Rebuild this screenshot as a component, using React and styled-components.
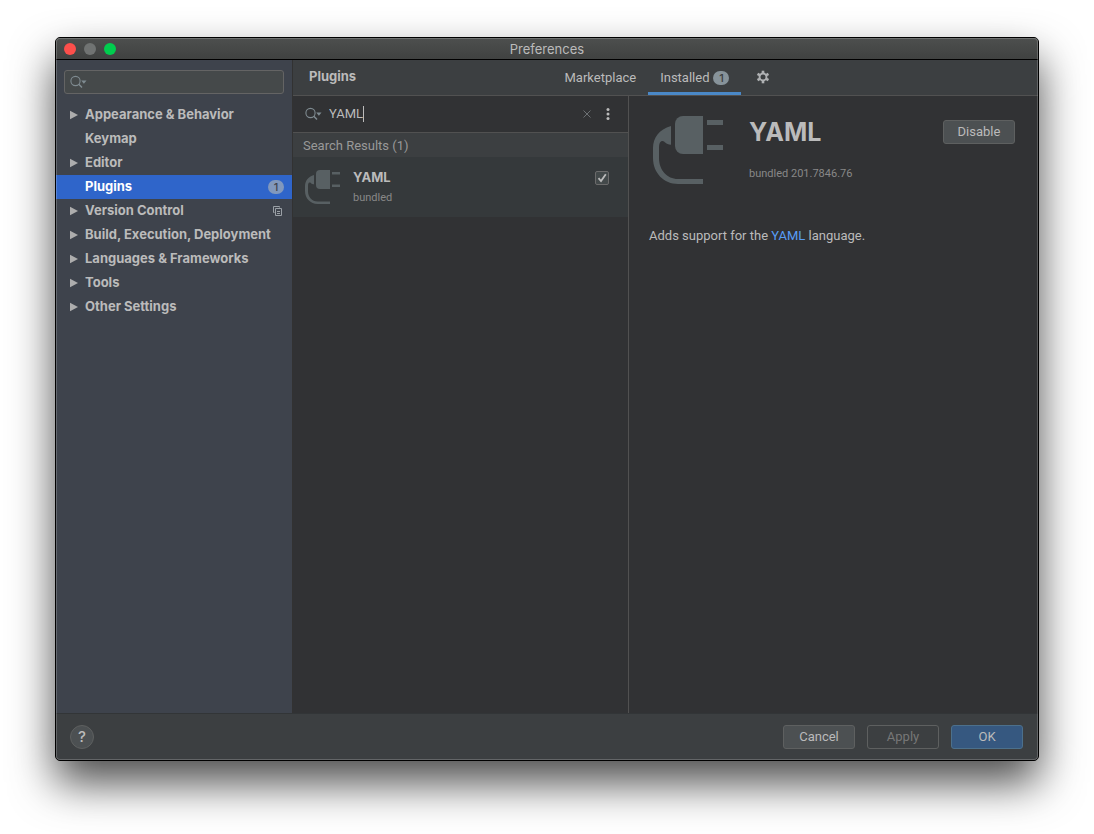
import React, { useState } from "react";
import styled, { createGlobalStyle } from "styled-components";

const GlobalStyle = createGlobalStyle`
  * {
    box-sizing: border-box;
  }
  body {
    margin: 0;
    background: #fff;
    color: #bbbbbb;
    font-family: Roboto, Inter, sans-serif;
    font-size: 13px;
    line-height: 16px;
  }
  button, input {
    font: inherit;
    color: inherit;
  }
  h1, h2, h3, p, ul {
    margin: 0;
    padding: 0;
  }
`;

const Page = styled.div`
  display: flex;
  min-height: 100vh;
  padding: 37px 55px 73px;
`;
const Window = styled.div`
  position: relative;
  display: flex;
  flex-direction: column;
  flex: 1;
  min-width: 0;
  border: 1px solid #000;
  border-radius: 5px;
  background: #3c3f41;
  box-shadow: 0 22px 44px rgba(0, 0, 0, 0.7);

  &::after {
    content: "";
    position: absolute;
    inset: 0;
    border-radius: 4px;
    box-shadow: inset 0 0 0 1px rgba(255, 255, 255, 0.2);
    pointer-events: none;
  }
`;
const TitleBar = styled.header`
  display: grid;
  grid-template-columns: 1fr auto 1fr;
  align-items: center;
  height: 22px;
  padding: 0 8px;
  border-bottom: 1px solid #000;
  border-radius: 4px 4px 0 0;
  background: linear-gradient(#4d4f4e, #404241);
`;
const Lights = styled.div`
  display: flex;
  gap: 8px;
`;
const Light = styled.button`
  width: 12px;
  height: 12px;
  padding: 0;
  border: none;
  border-radius: 50%;
  background: ${(props) => props.$color};
`;
const WindowTitle = styled.h1`
  font-family: Inter, sans-serif;
  font-size: 13px;
  font-weight: 400;
`;
const Body = styled.div`
  display: flex;
  flex: 1;
  min-height: 0;
`;

const Sidebar = styled.nav`
  flex: 0 0 236px;
  min-width: 0;
  background: #3e434c;
`;
const SideSearch = styled.label`
  display: flex;
  align-items: center;
  gap: 4px;
  height: 24px;
  margin: 10px 8px 8px;
  padding: 0 5px;
  border: 1px solid #646464;
  border-radius: 3px;
  background: #45494a;
`;
const SideInput = styled.input`
  flex: 1;
  min-width: 0;
  padding: 0;
  border: none;
  outline: none;
  background: none;
`;
const Tree = styled.ul`
  padding-top: 1px;
  list-style: none;
`;
const TreeItem = styled.button`
  display: flex;
  align-items: center;
  width: 100%;
  height: 24px;
  padding: 0 8px 0 14px;
  border: none;
  background: ${(props) => (props.$active ? "#2f65ca" : "none")};
  color: ${(props) => (props.$active ? "#fff" : "#bbbbbb")};
  font-family: Inter, sans-serif;
  font-weight: 700;
  line-height: 14px;
  text-align: left;
`;
const ArrowSlot = styled.span`
  display: flex;
  flex: 0 0 15px;
`;
const TreeLabel = styled.span`
  flex: 1;
  padding-bottom: 2px;
  white-space: nowrap;
`;
const Badge = styled.span`
  min-width: 16px;
  height: 14px;
  border-radius: 7px;
  background: ${(props) => (props.$blue ? "#8198bd" : "#87939a")};
  color: ${(props) => (props.$blue ? "#3e434c" : "#3c3f41")};
  font-family: Inter, sans-serif;
  font-size: 11px;
  font-weight: 500;
  line-height: 14px;
  text-align: center;
`;

const Main = styled.main`
  display: flex;
  flex-direction: column;
  flex: 1;
  min-width: 0;
  border-left: 1px solid #323232;
`;
const MainHeader = styled.div`
  display: grid;
  grid-template-columns: 1fr auto 1fr;
  height: 36px;
  border-bottom: 1px solid #515151;
`;
const MainTitle = styled.h2`
  padding: 8px 16px;
  font-family: Inter, sans-serif;
  font-size: 13px;
  font-weight: 700;
  line-height: 16px;
`;
const Tabs = styled.div`
  display: flex;
`;
const Tab = styled.button`
  display: flex;
  align-items: center;
  gap: 4px;
  padding: 3px 12px 0;
  border: none;
  border-bottom: 3px solid ${(props) => (props.$active ? "#4a88c7" : "transparent")};
  background: none;
`;
const GearButton = styled(Tab)`
  padding: 2px 8px 0 15px;
`;
const Columns = styled.div`
  display: flex;
  flex: 1;
  background: #313234;
`;

const ListPane = styled.section`
  flex: 0 0 336px;
  min-width: 0;
  border-right: 1px solid #515151;
`;
const SearchBar = styled.div`
  display: flex;
  align-items: center;
  height: 37px;
  padding: 0 12px;
  border-bottom: 1px solid #515151;
`;
const SearchLabel = styled.label`
  display: flex;
  align-items: center;
  flex: 1;
  gap: 7px;
`;
const QueryText = styled.span`
  display: flex;
  align-items: center;
`;
const QueryInput = styled.input`
  field-sizing: content;
  padding: 0;
  border: none;
  outline: none;
  background: none;
  caret-color: transparent;
`;
const Caret = styled.span`
  width: 1px;
  height: 16px;
  background: #bbbbbb;
`;
const IconButton = styled.button`
  display: flex;
  justify-content: center;
  align-items: center;
  width: 16px;
  height: 16px;
  margin-left: 5px;
  padding: 0;
  border: none;
  background: none;
`;
const GroupTitle = styled.h3`
  height: 24px;
  padding: 0 10px;
  background: #3c3f41;
  color: #999999;
  font-size: 13px;
  font-weight: 400;
  line-height: 25px;
`;
const PluginRow = styled.article`
  display: flex;
  align-items: flex-start;
  height: 60px;
  padding: 11px 19px 0 10px;
  background: #35393b;
`;
const PluginInfo = styled.div`
  flex: 1;
  padding-left: 10px;
`;
const PluginName = styled.h3`
  margin-bottom: 4px;
  font-family: Inter, sans-serif;
  font-size: 13px;
  font-weight: 700;
  line-height: 18px;
`;
const Muted = styled.p`
  color: #888888;
  font-size: 11px;
  line-height: 16px;
`;
const Check = styled.label`
  display: grid;
  margin-top: 3px;

  > * {
    grid-area: 1 / 1;
  }
  svg {
    pointer-events: none;
    visibility: hidden;
  }
  input:checked + svg {
    visibility: visible;
  }
`;
const CheckInput = styled.input`
  appearance: none;
  width: 14px;
  height: 14px;
  margin: 0;
  border: 1px solid #6b6b6b;
  border-radius: 2px;
  background: #43494a;
`;

const Details = styled.section`
  flex: 1;
  min-width: 0;
  padding: 16px 23px 0 20px;
`;
const DetailsHead = styled.div`
  display: flex;
  align-items: flex-start;
`;
const DetailsInfo = styled.div`
  flex: 1;
  padding: 4px 0 0 20px;
`;
const DetailsName = styled.h2`
  margin-bottom: 18px;
  font-family: Inter, sans-serif;
  font-size: 25px;
  font-weight: 700;
  line-height: 32px;
`;
const Description = styled.p`
  margin-top: 36px;
`;
const Link = styled.a`
  color: #589df6;
  text-decoration: none;
`;

const Button = styled.button`
  width: 72px;
  height: 24px;
  padding: 0;
  border: 1px solid ${(props) => (props.$primary ? "#4c708c" : "#5e6060")};
  border-radius: 3px;
  background: ${(props) => (props.$primary ? "#365880" : "#4c5052")};

  &:disabled {
    background: none;
    color: #777777;
  }
`;
const DetailsButton = styled(Button)`
  margin-top: 8px;
`;
const Footer = styled.footer`
  display: flex;
  align-items: center;
  gap: 12px;
  height: 47px;
  padding: 0 15px 0 14px;
  border-top: 1px solid #323537;
`;
const HelpButton = styled.button`
  width: 24px;
  height: 24px;
  margin-right: auto;
  padding: 0;
  border: 1px solid #5e6060;
  border-radius: 50%;
  background: #4c5052;
  font-family: Inter, sans-serif;
  font-size: 15px;
  font-weight: 500;
`;

const SearchIcon = () => (
  <svg width="17" height="14" viewBox="0 0 17 14" fill="none" aria-hidden="true">
    <circle cx="5.5" cy="6" r="4.6" stroke="#7f8b91" strokeWidth="1.1" />
    <path d="M8.8 9.3 12 12.5" stroke="#7f8b91" strokeWidth="1.5" />
    <path d="M11.2 5.500h5.300L13.900 8.700z" fill="#7f8b91" />
  </svg>
);

const PlugIcon = ({ size }) => (
  <svg width={size} height={size} viewBox="0 0 80 80" fill="#586063" aria-hidden="true">
    <path d="M34 4h20v38H34a8 8 0 0 1-8-8V12a8 8 0 0 1 8-8z" />
    <path d="M58 8h16v5H58zM58 33h16v5H58z" />
    <path d="M22 14C10 17.500 4 26 4 36v10c0 15 11 26 25 26h25v-5H29C18 67 10 58 10 46V36c0-4.500 1-6.500 3-7 3-.5 3 3.500 9 3.700z" />
  </svg>
);

const GearIcon = () => (
  <svg width="14" height="14" viewBox="0 0 14 14" aria-hidden="true">
    <g fill="#afb1b3">
      {[0, 60, 120].map((angle) => (
        <rect
          key={angle}
          x="5.7"
          y="0.7"
          width="2.6"
          height="12.6"
          transform={`rotate(${angle} 7 7)`}
        />
      ))}
      <circle cx="7" cy="7" r="4.400" />
    </g>
    <circle cx="7" cy="7" r="2.500" fill="#3c3f41" />
  </svg>
);

const sections = [
  { name: "Appearance & Behavior", nested: true },
  { name: "Keymap" },
  { name: "Editor", nested: true },
  { name: "Plugins", count: 1 },
  { name: "Version Control", nested: true, project: true },
  { name: "Build, Execution, Deployment", nested: true },
  { name: "Languages & Frameworks", nested: true },
  { name: "Tools", nested: true },
  { name: "Other Settings", nested: true },
];

const App = () => {
  const [selected, setSelected] = useState("Plugins");
  const [query, setQuery] = useState("YAML");
  const [enabled, setEnabled] = useState(true);

  return (
    <Page>
      <GlobalStyle />
      <Window>
        <TitleBar>
          <Lights>
            <Light $color="#fc4f4b" aria-label="Close" />
            <Light $color="#707372" aria-label="Minimize" />
            <Light $color="#00cd4e" aria-label="Zoom" />
          </Lights>
          <WindowTitle>Preferences</WindowTitle>
        </TitleBar>
        <Body>
          <Sidebar>
            <SideSearch>
              <SearchIcon />
              <SideInput type="text" aria-label="Search settings" />
            </SideSearch>
            <Tree>
              {sections.map((item) => (
                <li key={item.name}>
                  <TreeItem
                    $active={item.name === selected}
                    onClick={() => setSelected(item.name)}
                  >
                    <ArrowSlot>
                      {item.nested && (
                        <svg width="8" height="10" viewBox="0 0 8 10" aria-hidden="true">
                          <path d="M0 .8 8 5 0 9.200z" fill="#adadad" />
                        </svg>
                      )}
                    </ArrowSlot>
                    <TreeLabel>{item.name}</TreeLabel>
                    {item.count && <Badge $blue>{item.count}</Badge>}
                    {item.project && (
                      <svg width="12" height="10" viewBox="0 0 12 10" fill="none" stroke="#9aa0a6" aria-hidden="true">
                        <path d="M2.500 6.500h-1v-6h6v1" />
                        <path d="M3.500 2.500h6v7h-6zM5 5.500h3M5 7.500h3" />
                      </svg>
                    )}
                  </TreeItem>
                </li>
              ))}
            </Tree>
          </Sidebar>
          <Main>
            <MainHeader>
              <MainTitle>Plugins</MainTitle>
              <Tabs>
                <Tab>Marketplace</Tab>
                <Tab $active>
                  Installed <Badge>1</Badge>
                </Tab>
                <GearButton aria-label="Plugin settings">
                  <GearIcon />
                </GearButton>
              </Tabs>
            </MainHeader>
            <Columns>
              <ListPane>
                <SearchBar>
                  <SearchLabel>
                    <SearchIcon />
                    <QueryText>
                      <QueryInput
                        type="text"
                        aria-label="Search plugins"
                        value={query}
                        onChange={(e) => setQuery(e.target.value)}
                      />
                      <Caret />
                    </QueryText>
                  </SearchLabel>
                  <IconButton aria-label="Clear search" onClick={() => setQuery("")}>
                    <svg width="8" height="8" viewBox="0 0 8 8" stroke="#6c7073" aria-hidden="true">
                      <path d="M.5.5l7 7M7.500.5l-7 7" />
                    </svg>
                  </IconButton>
                  <IconButton aria-label="Search options">
                    <svg width="4" height="12" viewBox="0 0 4 12" fill="#bbbbbb" aria-hidden="true">
                      <circle cx="2" cy="1.500" r="1.500" />
                      <circle cx="2" cy="6" r="1.500" />
                      <circle cx="2" cy="10.500" r="1.500" />
                    </svg>
                  </IconButton>
                </SearchBar>
                <GroupTitle>Search Results (1)</GroupTitle>
                <PluginRow>
                  <PlugIcon size={40} />
                  <PluginInfo>
                    <PluginName>YAML</PluginName>
                    <Muted>bundled</Muted>
                  </PluginInfo>
                  <Check>
                    <CheckInput
                      type="checkbox"
                      aria-label="Enable YAML"
                      checked={enabled}
                      onChange={() => setEnabled(!enabled)}
                    />
                    <svg width="14" height="14" viewBox="0 0 14 14" fill="none" aria-hidden="true">
                      <path d="M3.500 7.200 6 10l4.800-6.800" stroke="#bbbbbb" strokeWidth="1.8" />
                    </svg>
                  </Check>
                </PluginRow>
              </ListPane>
              <Details>
                <DetailsHead>
                  <PlugIcon size={80} />
                  <DetailsInfo>
                    <DetailsName>YAML</DetailsName>
                    <Muted>bundled 201.7846.76</Muted>
                  </DetailsInfo>
                  <DetailsButton onClick={() => setEnabled(!enabled)}>
                    {enabled ? "Disable" : "Enable"}
                  </DetailsButton>
                </DetailsHead>
                <Description>
                  Adds support for the <Link href="#yaml">YAML</Link> language.
                </Description>
              </Details>
            </Columns>
          </Main>
        </Body>
        <Footer>
          <HelpButton aria-label="Help">?</HelpButton>
          <Button>Cancel</Button>
          <Button disabled>Apply</Button>
          <Button $primary>OK</Button>
        </Footer>
      </Window>
    </Page>
  );
};

export default App;
